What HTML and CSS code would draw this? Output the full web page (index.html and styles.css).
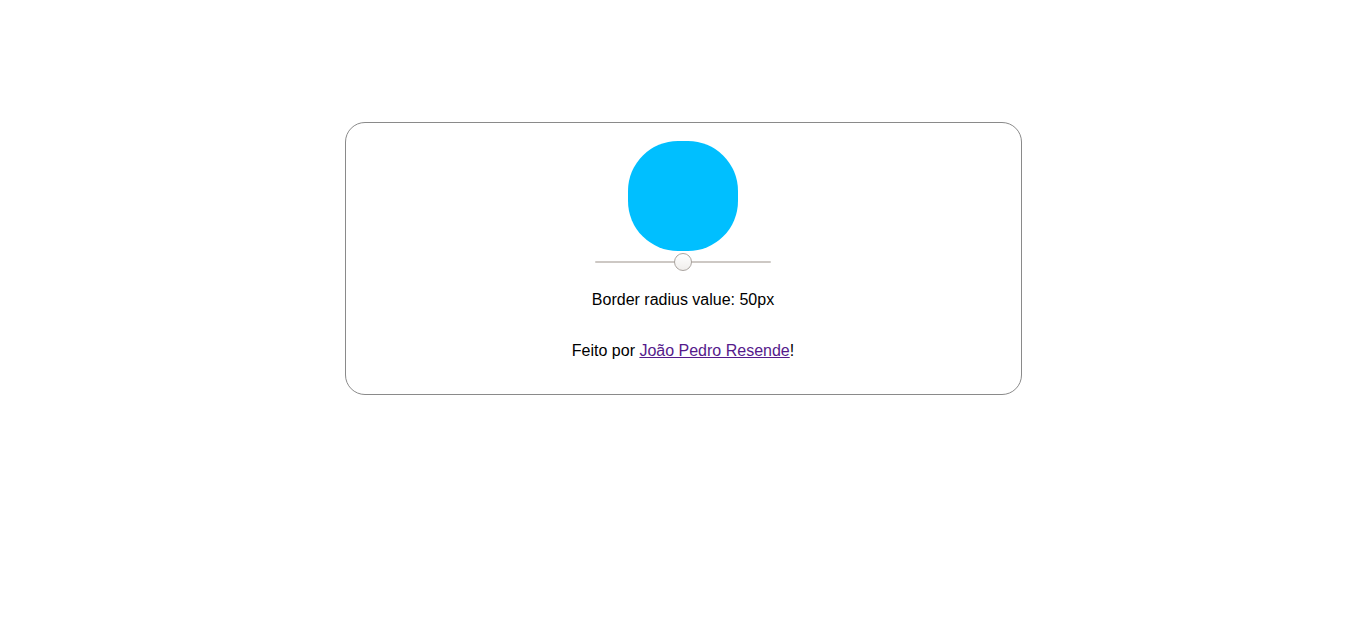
FILE: index.html
```html
<!DOCTYPE html>
<html lang="pt">
<head>
<meta charset="utf-8">
<title>Border radius</title>
<link rel="stylesheet" href="styles.css">
</head>
<body>
<main class="card">
  <div class="box"></div>
  <input class="slider" type="range" min="0" max="100" value="50">
  <p class="value">Border radius value: 50px</p>
  <p class="credit">Feito por <a class="link" href="#">João Pedro Resende</a>!</p>
</main>
</body>
</html>
```
FILE: styles.css
```css
html, body {
  margin: 0;
  padding: 0;
  background: #fff;
}
body {
  font-family: "Liberation Sans", Arial, sans-serif;
  font-size: 16px;
  color: #000;
  padding-top: 122px;
}
.card {
  box-sizing: border-box;
  width: 677px;
  margin: 0 auto;
  border: 1px solid #8a8a8a;
  border-radius: 20px;
  padding: 18px 0 33px;
  display: flex;
  flex-direction: column;
  align-items: center;
}
.box {
  width: 110px;
  height: 110px;
  border-radius: 50px;
  background: #00bfff;
}
.slider {
  -webkit-appearance: none;
  appearance: none;
  width: 176px;
  height: 20px;
  margin: 1px 0 0;
  padding: 0;
  background: transparent;
}
.slider::-webkit-slider-runnable-track {
  height: 2px;
  background: #cdc8c4;
  border-radius: 1px;
}
.slider::-webkit-slider-thumb {
  -webkit-appearance: none;
  appearance: none;
  width: 18px;
  height: 18px;
  margin-top: -8px;
  border-radius: 50%;
  border: 1px solid #aaa49f;
  box-sizing: border-box;
  background: linear-gradient(#ffffff, #f0eeec);
}
.value {
  margin: 18px 0 0;
  line-height: 20px;
}
.credit {
  margin: 31px 0 0;
  line-height: 20px;
}
.link {
  color: #551a8b;
  text-decoration: underline;
}
```
